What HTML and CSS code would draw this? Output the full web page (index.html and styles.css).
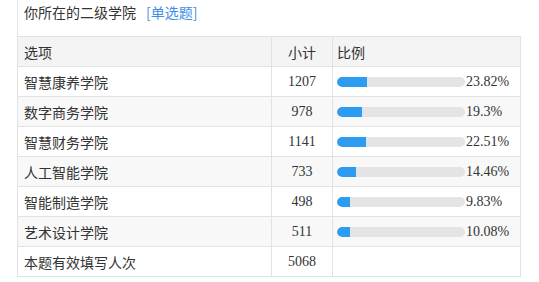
FILE: index.html
```html
<!DOCTYPE html>
<html lang="zh-CN">
<head>
<meta charset="utf-8">
<title>你所在的二级学院</title>
<link rel="stylesheet" href="styles.css">
</head>
<body>
<div class="question">
  <div class="q-title">你所在的二级学院<span class="q-type">[单选题]</span></div>
  <table class="stats">
    <colgroup><col class="w-opt"><col class="w-num"><col class="w-ratio"></colgroup>
    <thead>
      <tr><th class="c-opt">选项</th><th class="c-num">小计</th><th class="c-ratio">比例</th></tr>
    </thead>
    <tbody>
      <tr><td class="c-opt">智慧康养学院</td><td class="c-num">1207</td><td class="c-ratio"><div class="ratio"><div class="bar"><div class="fill" style="width:23.82%"></div></div><span class="pct">23.82%</span></div></td></tr>
      <tr><td class="c-opt">数字商务学院</td><td class="c-num">978</td><td class="c-ratio"><div class="ratio"><div class="bar"><div class="fill" style="width:19.3%"></div></div><span class="pct">19.3%</span></div></td></tr>
      <tr><td class="c-opt">智慧财务学院</td><td class="c-num">1141</td><td class="c-ratio"><div class="ratio"><div class="bar"><div class="fill" style="width:22.51%"></div></div><span class="pct">22.51%</span></div></td></tr>
      <tr><td class="c-opt">人工智能学院</td><td class="c-num">733</td><td class="c-ratio"><div class="ratio"><div class="bar"><div class="fill" style="width:14.46%"></div></div><span class="pct">14.46%</span></div></td></tr>
      <tr><td class="c-opt">智能制造学院</td><td class="c-num">498</td><td class="c-ratio"><div class="ratio"><div class="bar"><div class="fill" style="width:9.83%"></div></div><span class="pct">9.83%</span></div></td></tr>
      <tr><td class="c-opt">艺术设计学院</td><td class="c-num">511</td><td class="c-ratio"><div class="ratio"><div class="bar"><div class="fill" style="width:10.08%"></div></div><span class="pct">10.08%</span></div></td></tr>
      <tr><td class="c-opt">本题有效填写人次</td><td class="c-num">5068</td><td class="c-ratio"></td></tr>
    </tbody>
  </table>
</div>
</body>
</html>
```
FILE: styles.css
```css
html, body {
  margin: 0;
  padding: 0;
  background: #fff;
}
body {
  font-family: "Noto Sans CJK SC", "Noto Sans", sans-serif;
  color: #333;
}
.question {
  padding-left: 17px;
}
.q-title {
  height: 36px;
  box-sizing: border-box;
  padding: 1px 0 0 6px;
  font-size: 14px;
  line-height: 22px;
  border-left: 1px solid #e6e6e6;
  color: #333;
}
.q-type {
  color: #3d8fe6;
  margin-left: 10px;
}
.stats {
  border-collapse: collapse;
  width: 503px;
  table-layout: fixed;
  font-size: 14px;
}
.w-opt { width: 254px; }
.w-num { width: 61px; }
.w-ratio { width: 188px; }
.stats th, .stats td {
  border: 1px solid #e2e2e2;
  height: 29px;
  padding: 0;
  font-weight: normal;
  text-align: left;
  vertical-align: middle;
}
.stats thead th {
  background: #f4f4f4;
}
.stats tbody tr:nth-child(even) td {
  background: #f8f8f8;
}
.stats .c-opt {
  padding-left: 6px;
}
.stats .c-num {
  text-align: center;
  font-family: "Liberation Serif", "Times New Roman", serif;
  font-size: 14px;
}
.stats th.c-num {
  font-family: "Noto Sans CJK SC", sans-serif;
}
.stats .c-ratio {
  padding-left: 4px;
}
.ratio {
  display: flex;
  align-items: center;
}
.bar {
  width: 128px;
  height: 10px;
  border-radius: 5px;
  background: #e4e4e4;
  overflow: hidden;
  flex: none;
}
.fill {
  height: 100%;
  background: #2b9cf2;
  border-radius: 5px 0 0 5px;
}
.pct {
  margin-left: 1px;
  font-family: "Liberation Serif", "Times New Roman", serif;
  font-size: 14px;
  color: #333;
}
```
